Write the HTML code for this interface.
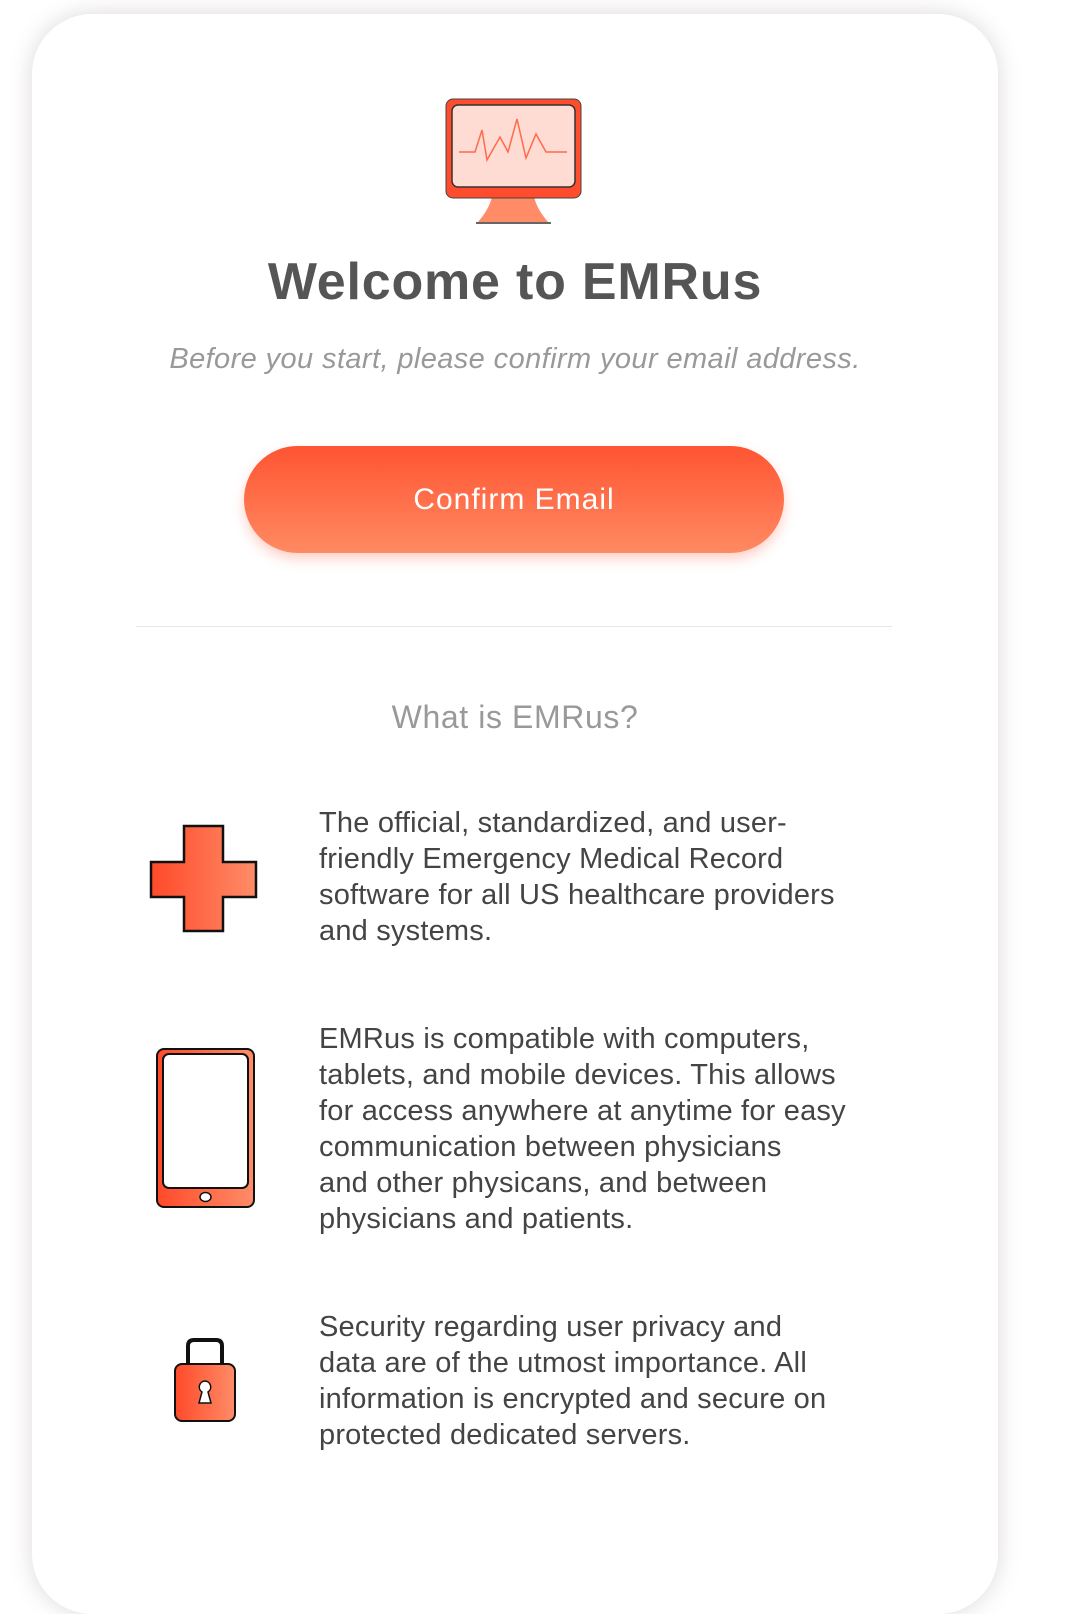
<!DOCTYPE html>
<html><head><meta charset="utf-8"><style>
body{margin:0;width:1066px;height:1514px;background:#fff;overflow:hidden;font-family:"Liberation Sans",sans-serif;position:relative}
.card{position:absolute;left:32px;top:14px;width:966px;height:1600px;background:#fff;border-radius:60px;box-shadow:0 0 22px rgba(120,100,100,.25)}
.a{position:absolute;left:0;width:1030px;text-align:center;white-space:nowrap}
h1{position:absolute;left:0;width:1030px;top:252px;margin:0;text-align:center;font-size:52px;font-weight:bold;color:#555;letter-spacing:0.8px}
.sub{top:343px;font-style:italic;font-size:29px;color:#999;letter-spacing:0.4px}
.btn{position:absolute;left:244px;top:446px;width:540px;height:107px;border-radius:54px;background:linear-gradient(#ff5432,#ff8a62);box-shadow:0 6px 12px rgba(255,100,70,.3);color:#fff;font-size:30px;letter-spacing:1px;text-align:center;line-height:107px}
.hr{position:absolute;left:136px;top:626px;width:756px;height:1px;background:#e6e6e6}
.q{top:699px;font-size:32px;color:#999;letter-spacing:0.6px}
.p{position:absolute;left:319px;width:600px;font-size:29px;line-height:36px;color:#444;letter-spacing:0.2px;white-space:nowrap}
svg{position:absolute}
</style></head><body>
<div class="card"></div>
<svg style="left:440px;top:95px" width="150" height="135" viewBox="440 95 150 135">
<path d="M492 196 Q490 208 478 222 L548 222 Q536 208 534 196Z" fill="#ff8c66"/>
<line x1="476" y1="223" x2="551" y2="223" stroke="#333" stroke-width="1.5"/>
<rect x="446" y="99" width="135" height="99" rx="7" fill="#ff4c2c" stroke="#444" stroke-width="1"/>
<rect x="452" y="105" width="123" height="82" rx="6" fill="#ffdcd3" stroke="#333" stroke-width="1.5"/>
<polyline points="459,152 475,152 482,130 487,160 500,137 508,152 517,119 526,158 536,134 546,152 567,152" fill="none" stroke="#ff6a4a" stroke-width="1.5"/>
</svg>
<h1>Welcome to EMRus</h1>
<div class="a sub">Before you start, please confirm your email address.</div>
<div class="btn">Confirm Email</div>
<div class="hr"></div>
<div class="a q">What is EMRus?</div>
<svg style="left:145px;top:820px" width="120" height="120" viewBox="145 820 120 120">
<defs><linearGradient id="g" x1="0" x2="1"><stop offset="0" stop-color="#ff4a2a"/><stop offset="1" stop-color="#ff8c68"/></linearGradient></defs>
<path d="M184 826H223V862H256V897H223V931H184V897H151V862H184Z" fill="url(#g)" stroke="#111" stroke-width="2.5"/>
</svg>
<svg style="left:150px;top:1042px" width="115" height="175" viewBox="150 1042 115 175">
<defs><linearGradient id="g2" x1="0" x2="1"><stop offset="0" stop-color="#ff4a2a"/><stop offset="1" stop-color="#ff8c68"/></linearGradient></defs>
<rect x="157" y="1049" width="97" height="158" rx="7" fill="url(#g2)" stroke="#111" stroke-width="2"/>
<rect x="163" y="1054" width="85" height="134" rx="6" fill="#fff" stroke="#111" stroke-width="2"/>
<ellipse cx="205.5" cy="1197" rx="5.5" ry="4.5" fill="#fff" stroke="#111" stroke-width="1.5"/>
</svg>
<svg style="left:168px;top:1332px" width="75" height="95" viewBox="168 1332 75 95">
<defs><linearGradient id="g3" x1="0" x2="1"><stop offset="0" stop-color="#ff4a2a"/><stop offset="1" stop-color="#ff8c68"/></linearGradient></defs>
<path d="M188 1368V1346Q188 1340 194 1340H216Q222 1340 222 1346V1368" fill="none" stroke="#111" stroke-width="4"/>
<rect x="175" y="1364" width="60" height="57" rx="7" fill="url(#g3)" stroke="#111" stroke-width="2"/>
<path d="M205 1381a6 6 0 0 1 3 11l3 11h-12l3-11a6 6 0 0 1 3-11z" fill="#fff" stroke="#111" stroke-width="1.5"/>
</svg>
<div class="p" style="top:805px">The official, standardized, and user-<br>friendly Emergency Medical Record<br>software for all US healthcare providers<br>and systems.</div>
<div class="p" style="top:1021px">EMRus is compatible with computers,<br>tablets, and mobile devices. This allows<br>for access anywhere at anytime for easy<br>communication between physicians<br>and other physicans, and between<br>physicians and patients.</div>
<div class="p" style="top:1309px">Security regarding user privacy and<br>data are of the utmost importance. All<br>information is encrypted and secure on<br>protected dedicated servers.</div>
</body></html>
